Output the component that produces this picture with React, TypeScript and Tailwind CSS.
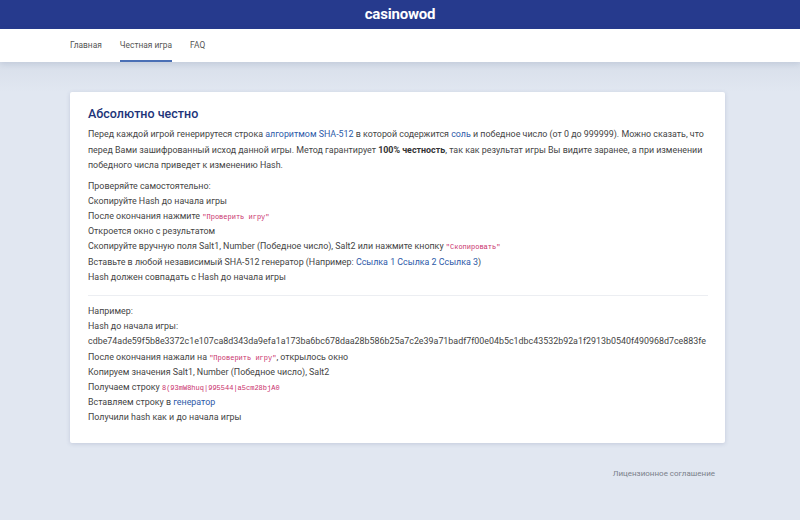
import React from "react";

const A = ({ children }: { children: React.ReactNode }) => (
  <a className="text-[#2c59a8]">{children}</a>
);
const C = ({ children }: { children: React.ReactNode }) => (
  <code className="text-[7px] leading-none text-[#c9306c] [font-family:'Liberation_Mono',monospace]">{children}</code>
);

export default function App() {
  return (
    <div className="min-h-[520px] bg-[#e1e7f1] [font-family:Roboto,sans-serif] text-[#444]">
      <div className="h-[29px] bg-[#263a8d] flex items-center justify-center">
        <span className="text-white font-bold text-[15px] tracking-[-0.2px] leading-none">casinowod</span>
      </div>
      <div className="h-[33px] bg-white flex items-stretch pl-[70px] gap-[18px] text-[8.4px] text-[#555] shadow-[0_2px_6px_rgba(60,80,130,0.15)] relative">
        <div className="flex items-center">Главная</div>
        <div className="flex items-center border-b-2 border-[#4a6fb5] pt-[2px]">Честная игра</div>
        <div className="flex items-center">FAQ</div>
      </div>
      <div className="bg-gradient-to-b from-[#d8dfea] to-[#e1e7f1] h-[30px]"></div>
      <div className="pl-[70px] pr-[75px]">
        <div className="bg-white rounded-[2px] shadow-[0_1px_4px_rgba(60,80,130,0.18)] pt-[13px] pb-[17px] px-[18px] text-[8.9px] leading-[15.2px]">
          <h1 className="text-[12.5px] font-medium text-[#213479] leading-[18px] mb-[4px]">Абсолютно честно</h1>
          <p className="leading-[15.5px]">
            Перед каждой игрой генерирутеся строка <A>алгоритмом SHA-512</A> в которой содержится <A>соль</A> и победное число (от 0 до 999999). Можно сказать, что перед Вами зашифрованный исход данной игры. Метод гарантирует <b className="font-bold text-[#333]">100% честность</b>, так как результат игры Вы видите заранее, а при изменении победного числа приведет к изменению Hash.
          </p>
          <div className="mt-[5px]">
            <div>Проверяйте самостоятельно:</div>
            <div>Скопируйте Hash до начала игры</div>
            <div>После окончания нажмите <C>"Проверить игру"</C></div>
            <div>Откроется окно с результатом</div>
            <div>Скопируйте вручную поля Salt1, Number (Победное число), Salt2 или нажмите кнопку <C>"Скопировать"</C></div>
            <div>Вставьте в любой независимый SHA-512 генератор (Например: <A>Ссылка 1</A> <A>Ссылка 2</A> <A>Ссылка 3</A>)</div>
            <div>Hash должен совпадать с Hash до начала игры</div>
          </div>
          <div className="border-t border-[#eceef2] mt-[10px] mb-[8px] mr-[-1px]"></div>
          <div>
            <div>Например:</div>
            <div>Hash до начала игры:</div>
            <div>cdbe74ade59f5b8e3372c1e107ca8d343da9efa1a173ba6bc678daa28b586b25a7c2e39a71badf7f00e04b5c1dbc43532b92a1f2913b0540f490968d7ce883fe</div>
            <div>После окончания нажали на <C>"Проверить игру"</C>, открылось окно</div>
            <div>Копируем значения Salt1, Number (Победное число), Salt2</div>
            <div>Получаем строку <C>8(93mW8huq|995544|a5cm28bjA0</C></div>
            <div>Вставляем строку в <A>генератор</A></div>
            <div>Получили hash как и до начала игры</div>
          </div>
        </div>
        <div className="flex justify-end pr-[10px] pt-[25px] text-[8px] text-[#7a7f8a]">Лицензионное соглашение</div>
      </div>
    </div>
  );
}
